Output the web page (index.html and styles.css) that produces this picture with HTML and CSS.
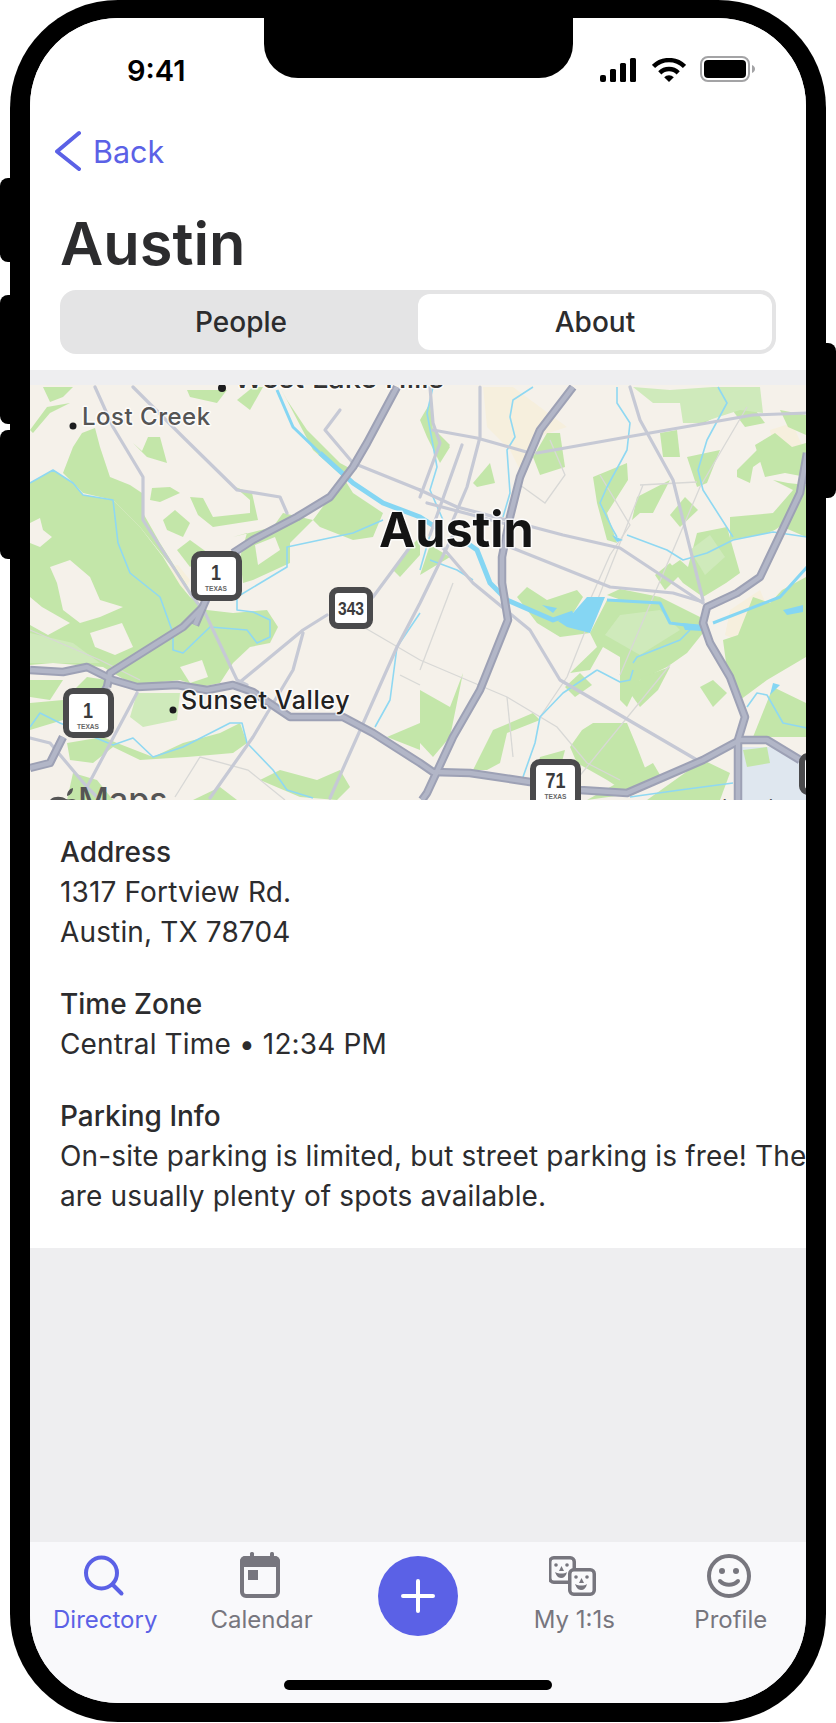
FILE: index.html
```html
<!DOCTYPE html>
<html lang="en">
<head>
<meta charset="utf-8">
<title>Austin</title>
<link rel="stylesheet" href="styles.css">
</head>
<body>
<div class="device">
  <span class="side-btn btn-mute"></span>
  <span class="side-btn btn-up"></span>
  <span class="side-btn btn-down"></span>
  <span class="side-btn btn-power"></span>
  <div class="screen">
    <div class="notch"></div>
    <header class="header">
      <div class="status">
        <span class="time">9:41</span>
        <div class="status-icons">
          <svg class="ico-signal" viewBox="0 0 36 24" width="36" height="24"><rect x="0" y="17" width="6" height="7" rx="2"/><rect x="10" y="11" width="6" height="13" rx="1.5"/><rect x="20" y="5" width="6" height="19" rx="1.5"/><rect x="30" y="0" width="6" height="24" rx="1.5"/></svg>
          <svg class="ico-wifi" viewBox="0 0 34 24" width="34" height="24"><path class="wifi-arc" d="M1.5 8.5A22 22 0 0 1 32.5 8.5"/><path class="wifi-arc" d="M7.8 14.8A13 13 0 0 1 26.2 14.8"/><path d="M17 24L12.2 19.2A6.8 6.8 0 0 1 21.8 19.2Z"/></svg>
          <svg class="ico-battery" viewBox="0 0 55 26" width="55" height="26"><rect class="batt-shell" x="1" y="1" width="48" height="24" rx="7"/><rect x="4" y="4" width="42" height="18" rx="4"/><path class="batt-nub" d="M52 9c2 .8 3 2.400 3 4s-1 3.200-3 4z"/></svg>
        </div>
      </div>
      <a class="back">
        <svg class="ico-back" viewBox="0 0 26 42" width="26" height="42"><path d="M24 3L2 21.500L24 39"/></svg>
        <span>Back</span>
      </a>
      <h1 class="title">Austin</h1>
      <div class="segment">
        <div class="seg-item">People</div>
        <div class="seg-item seg-active">About</div>
      </div>
    </header>

    <div class="map">
      <svg class="map-svg" viewBox="0 0 776 415" width="776" height="415">
        <defs>
          <g id="majors">
            <polyline points="367,2 337,58 323,82 300,112 267,132 223,155 203,168"/>
            <polyline points="173,222 153,242 80,288 77,302"/>
            <polyline points="178,210 165,240"/>
            <polyline points="0,285 33,287 57,282 83,295 107,302 147,300 177,305 203,300 223,307 260,332 313,332 343,348 390,378 403,387 440,388 500,397 550,405 597,408 673,375 710,355 737,355 770,375"/>
            <polyline points="77,302 60,330"/>
            <polyline points="33,352 20,378 0,383"/>
            <polyline points="543,2 510,45 490,92 480,132 472,172 472,198 478,235 450,305 423,352 397,408 392,415"/>
            <polyline points="777,68 770,108 730,192 707,208 677,222 673,238 680,258 700,292 715,332 708,355 708,415"/>
          </g>
        </defs>
        <g class="map-shapes">
          <g class="tan">
            <polygon points="453,2 483,2 537,42 507,52 490,85 480,65 457,42"/>
            <polygon points="137,182 148,180 160,195 150,215 140,205"/>
            <polygon points="700,225 730,205 745,240 720,262 695,250"/>
            <polygon points="740,45 762,38 772,60 745,72"/>
          </g>
          <g class="green">
            <polygon points="0,98 23,85 43,98 53,110 83,115 110,142 133,172 150,200 160,212 177,225 203,228 237,225 248,242 240,258 220,262 203,278 190,298 170,302 150,295 123,298 107,302 73,282 23,278 0,280"/>
            <polygon points="13,2 43,2 33,12 20,17"/>
            <polygon points="0,45 17,22 40,18 20,28 3,48"/>
            <polygon points="52,48 65,43 70,62 80,92 100,100 112,108 113,128 130,158 147,185 160,205 110,142 83,115 53,108 33,88 43,62"/>
            <polygon points="103,58 112,66 118,52 130,52 137,78 117,72"/>
            <polygon points="122,103 140,102 150,108 130,117 120,115"/>
            <polygon points="160,112 173,113 183,132 220,128 220,115 205,102 222,108 228,135 183,142 168,130"/>
            <polygon points="133,135 145,125 160,138 153,152 137,145"/>
            <polygon points="147,165 160,155 178,168 160,182"/>
            <polygon points="203,152 243,142 253,128 283,135 260,158 260,178 223,195 213,198 210,172 217,148"/>
            <polygon points="250,2 283,65 313,92 323,108 353,128 343,152 323,155 290,142 283,135 300,112 323,85 310,78 277,45 257,15"/>
            <polygon points="363,185 377,165 390,152 390,170 370,192"/>
            <polygon points="157,5 197,5 187,18 160,12"/>
            <polygon points="207,15 223,2 233,2 220,25"/>
            <polygon points="0,318 33,315 33,335 0,345"/>
            <polygon points="37,358 73,352 87,358 123,372 153,358 190,348 210,338 217,358 203,368 157,372 110,375 83,362 63,378 40,375"/>
            <polygon points="230,395 250,385 287,395 310,385 320,402 307,415 270,412"/>
            <polygon points="43,388 67,395 83,415 37,415"/>
            <polygon points="190,402 207,415 163,415"/>
            <polygon points="357,352 390,338 390,365"/>
            <polygon points="0,295 33,295 20,315 0,312"/>
            <polygon points="57,292 77,295 77,302 53,318 37,312"/>
            <polygon points="390,35 400,18 403,45 420,62 410,78 397,52"/>
            <polygon points="503,72 517,48 530,48 535,82 510,90"/>
            <polygon points="443,98 460,78 465,98 447,102"/>
            <polygon points="563,92 597,78 598,95 577,128 587,158 577,155 567,118"/>
            <polygon points="653,22 697,5 693,28 670,40"/>
            <polygon points="630,48 647,45 650,72 633,72"/>
            <polygon points="657,72 690,65 677,98 667,102"/>
            <polygon points="607,112 640,95 623,128 610,128 602,135"/>
            <polygon points="707,85 730,62 743,68 723,82 720,98 707,92"/>
            <polygon points="743,95 763,105 743,128 700,132 700,155 737,148 753,142 776,152 776,100 758,98"/>
            <polygon points="640,182 650,175 658,182 667,148 697,142 702,160 710,188 696,198 673,212 653,198"/>
            <polygon points="693,255 708,250 723,212 740,218 752,205 776,192 776,272 737,295 710,315 697,285"/>
            <polygon points="723,352 743,302 776,318 776,352"/>
            <polygon points="670,302 683,295 697,308 683,322"/>
            <polygon points="560,248 577,215 630,212 670,232 673,248 657,268 637,282 610,295 597,322 590,315 590,272 573,262 560,285 540,288 567,262"/>
            <polygon points="487,212 497,202 517,215 547,205 553,212 537,238 560,248 530,252 507,238"/>
            <polygon points="577,210 590,204 630,212 600,218"/>
            <polygon points="540,362 552,345 563,338 597,338 607,362 617,388 597,408 577,395 547,378"/>
            <polygon points="443,385 463,345 503,328 510,335 477,348 470,378 457,385"/>
            <polygon points="390,305 420,322 433,288 420,352 403,372 390,358"/>
            <polygon points="557,415 623,378 633,395 607,408"/>
            <polygon points="673,375 700,388 690,415 617,415"/>
            <polygon points="400,160 420,172 390,190"/>
            <polygon points="640,130 655,112 668,125 650,142"/>
            <polygon points="625,190 640,178 650,190 635,205"/>
            <polygon points="700,22 718,15 735,38 715,42"/>
            <polygon points="750,25 776,30 776,50 758,42"/>
            <polygon points="600,308 612,292 640,282 628,305 610,322"/>
            <polygon points="535,302 550,288 562,300 545,312"/>
            <polygon points="405,45 420,60 412,70"/>
            <polygon points="725,60 745,48 762,62 776,58 776,92 755,88 735,92"/>
            <polygon points="510,372 535,365 528,392 505,390"/>
          </g>
          <g class="green-light">
            <polygon points="603,2 640,5 683,2 730,2 733,28 710,25 670,38 653,38 650,18 623,18"/>
            <polygon points="107,308 150,308 147,335 113,342 100,332"/>
            <polygon points="0,248 43,258 70,278 0,278"/>
            <polygon points="590,230 630,225 650,245 610,270 575,250"/>
            <polygon points="660,165 680,150 695,172 675,190"/>
          </g>
          <g class="cream">
            <polygon points="0,138 10,133 13,145 22,152 10,162 0,158"/>
            <polygon points="20,182 40,175 60,192 70,215 93,222 70,232 50,238 33,225 27,198"/>
            <polygon points="0,212 12,222 40,238 18,250 0,240"/>
            <polygon points="60,248 92,238 103,262 85,270 65,262"/>
            <polygon points="150,282 172,275 178,292 160,298"/>
            <polygon points="225,160 245,152 250,165 228,180"/>
            <polygon points="738,150 752,140 760,165 742,172"/>
          </g>
          <polygon class="airport" points="710,362 740,362 777,375 777,415 710,415"/>
          <polygon class="green" points="713,365 737,362 740,378 717,382"/>
        </g>

        <g class="thin map-shapes">
          <polyline points="390,275 477,312 527,342 557,378 590,395"/>
          <polyline points="477,312 483,372"/>
          <polyline points="423,198 390,285"/>
          <polyline points="610,100 667,97"/>
          <polyline points="613,100 537,292 510,332"/>
          <polyline points="717,22 670,102 590,290"/>
          <polyline points="570,90 600,140 580,170 560,215"/>
          <polyline points="490,100 515,118 535,90 520,55"/>
          <polyline points="145,412 170,372 218,385 255,415"/>
          <polyline points="370,290 390,300"/>
          <polyline points="0,245 70,275 110,295"/>
          <polyline points="640,280 530,415"/>
          <polyline points="330,240 390,275"/>
        </g>

        <g class="creek map-shapes">
          <polyline points="0,98 23,85 43,98 53,110 83,115 88,158 100,188 130,212 143,248 143,265 153,268 180,242 217,245 227,258 240,252 240,235 223,227 207,225 207,212 257,182 257,162 323,148 353,135"/>
          <polyline points="0,342 10,328 30,338 83,360 103,353 123,372 153,362 200,338 212,338 217,358 243,385 257,405 283,413"/>
          <polyline points="345,342 360,315 367,262 390,228"/>
          <polyline points="400,175 427,185 443,195"/>
          <polyline points="403,2 397,28 407,82 400,105 413,135"/>
          <polyline points="503,2 483,15 480,32 485,52 477,65 480,108 473,132"/>
          <polyline points="587,2 587,18 600,38 597,65 590,78 577,102 570,118 583,145 587,152"/>
          <polyline points="597,150 637,165 653,175 677,168 703,155 743,147 777,152"/>
          <polyline points="688,2 697,18 677,55 668,85 673,105 703,152"/>
          <polyline points="660,245 650,255 607,272 603,278"/>
          <polyline points="567,285 590,297 600,295 603,285"/>
          <polyline points="567,285 533,308 510,332 505,358 493,392"/>
          <polyline points="717,322 727,308 737,310 753,338 777,343"/>
          <polyline points="600,412 650,405 703,398"/>
          <polyline points="400,150 390,185"/>
        </g>

        <g class="river map-shapes">
          <polyline class="river-n" points="247,5 263,42 290,68"/>
          <polyline class="river-w" points="290,68 323,98 353,118 390,132 410,145"/>
          <polyline class="river-w" points="437,158 447,165 460,198 477,215 523,235 543,228"/>
          <polyline class="river-s" points="577,215 630,218 640,238 670,242"/>
          <polyline class="river-s" points="683,238 750,212 777,182"/>
          <polygon class="water" points="557,212 575,212 560,248 537,242 528,236 543,228"/>
          <polygon class="water" points="753,225 773,220 773,227 757,230"/>
          <polygon class="water" points="582,150 593,155 587,157"/>
          <polygon class="water" points="743,298 750,300 740,310"/>
          <polygon class="water" points="512,220 527,223 523,228"/>
          <polygon class="water" points="652,238 675,240 672,246 655,245"/>
        </g>

        <g class="minor map-shapes">
          <polyline points="65,2 83,42 113,92 113,135 160,208 175,228 207,295 217,300"/>
          <polyline points="103,2 153,52 207,105 250,112 257,128"/>
          <polyline points="310,25 295,45 323,78 390,105"/>
          <polyline points="210,297 273,245 297,230"/>
          <polyline points="343,212 380,162"/>
          <polyline points="273,248 263,285 223,352 180,413"/>
          <polyline points="300,413 367,262 390,218 423,150"/>
          <polyline points="107,308 57,402"/>
          <polyline points="0,353 20,358 57,402 70,415"/>
          <polyline points="600,2 610,35 643,95 673,215"/>
          <polyline points="507,68 597,52 723,30 777,28"/>
          <polyline points="400,2 403,38 410,58 390,112"/>
          <polyline points="403,45 447,53 500,68"/>
          <polyline points="390,105 427,122 533,150 590,163 673,218"/>
          <polyline points="480,162 580,202 643,208 673,217"/>
          <polyline points="413,163 443,198 500,245 530,295 667,375"/>
          <polyline points="450,2 450,52 437,102 423,135"/>
          <polyline points="397,118 480,140"/>
          <polyline points="432,60 400,150"/>
        </g>

        <g class="map-shapes">
          <use href="#majors" class="major-out"/>
          <use href="#majors" class="major-in"/>
        </g>

        <g class="shield">
          <rect x="164" y="169" width="45" height="44" rx="7"/>
          <text class="shield-num" x="186" y="195" textLength="10" lengthAdjust="spacingAndGlyphs">1</text>
          <text class="shield-sub" x="186" y="206" textLength="22" lengthAdjust="spacingAndGlyphs">TEXAS</text>
        </g>
        <g class="shield">
          <rect x="36" y="306" width="45" height="44" rx="7"/>
          <text class="shield-num" x="58" y="333" textLength="10" lengthAdjust="spacingAndGlyphs">1</text>
          <text class="shield-sub" x="58" y="344" textLength="22" lengthAdjust="spacingAndGlyphs">TEXAS</text>
        </g>
        <g class="shield">
          <rect x="302" y="205" width="38" height="36" rx="6"/>
          <text class="shield-num shield-num-sm" x="321" y="230" textLength="26" lengthAdjust="spacingAndGlyphs">343</text>
        </g>
        <g class="shield">
          <rect x="503" y="377" width="45" height="44" rx="7"/>
          <text class="shield-num" x="525.500" y="403" textLength="20" lengthAdjust="spacingAndGlyphs">71</text>
          <text class="shield-sub" x="525.500" y="414" textLength="22" lengthAdjust="spacingAndGlyphs">TEXAS</text>
        </g>
        <g class="shield">
          <rect x="772" y="371" width="40" height="36" rx="6"/>
        </g>

        <circle class="city-dot" cx="192" cy="3" r="4"/>
        <text class="label label-top" x="204" y="3">West Lake Hills</text>
        <circle class="city-dot" cx="43" cy="41" r="3.500"/>
        <text class="label label-lost" x="52" y="40">Lost Creek</text>
        <circle class="city-dot" cx="143" cy="325" r="3.500"/>
        <text class="label label-sunset" x="151" y="324">Sunset Valley</text>
        <text class="label label-austin" x="349" y="162">Austin</text>
        <path class="apple" d="M36 414c-4-3-12-3-15 0-4 4-3 10-1 15h30c-3-3-4-6-1-10-1-3-4-5-7-5-2 0-4 1-6 0zM37 411c0-4 2-7 6-8 0 4-2 7-6 8z"/>
        <text class="label label-maps" x="48" y="427">Maps</text>
        <text class="label label-legal" x="692" y="429">Legal</text>
      </svg>
    </div>

    <section class="details">
      <div class="block">
        <div class="block-label">Address</div>
        <div class="block-value">1317 Fortview Rd.<br>Austin, TX 78704</div>
      </div>
      <div class="block">
        <div class="block-label">Time Zone</div>
        <div class="block-value">Central Time • 12:34 PM</div>
      </div>
      <div class="block">
        <div class="block-label">Parking Info</div>
        <div class="block-value">On-site parking is limited, but street parking is free! There<br>are usually plenty of spots available.</div>
      </div>
    </section>

    <div class="spacer"></div>

    <nav class="tabbar">
      <div class="tabs">
        <div class="tab tab-active">
          <svg class="tab-icon" viewBox="0 0 48 48" width="48" height="48"><circle cx="20.500" cy="21" r="15.500"/><path d="M31.500 32.500l9 9"/></svg>
          <span>Directory</span>
        </div>
        <div class="tab">
          <svg class="tab-icon" viewBox="2 0 48 48" width="48" height="48"><rect x="6" y="6" width="36" height="38" rx="4"/><path class="cal-fill" d="M4 15V9a5 5 0 0 1 5-5h30a5 5 0 0 1 5 5v6z"/><rect class="cal-fill" x="14" y="0" width="4" height="6" rx="1.500"/><rect class="cal-fill" x="34" y="0" width="4" height="6" rx="1.500"/><rect class="cal-fill" x="12" y="18" width="10" height="10"/></svg>
          <span>Calendar</span>
        </div>
        <div class="tab tab-plus">
          <button class="plus" type="button">
            <svg viewBox="0 0 34 34" width="34" height="34"><path d="M17 2v30M2 17h30"/></svg>
          </button>
        </div>
        <div class="tab">
          <svg class="tab-icon tab-icon-pair" viewBox="2 0 50 48" width="50" height="48"><rect x="2.750" y="5.750" width="24.500" height="24.500" rx="4"/><circle class="cal-fill" cx="9" cy="13" r="1.800"/><circle class="cal-fill" cx="20" cy="13" r="1.800"/><path class="cal-fill" d="M14.500 14l2.500 5h-5z"/><path class="cal-fill" d="M8 20c4 2 9 2 12 0-1 4-3 6-6 6s-5-3-6-6z"/><rect class="pair-front" x="22.750" y="17.750" width="24.500" height="24.500" rx="4"/><circle class="cal-fill" cx="29" cy="25" r="1.800"/><circle class="cal-fill" cx="40" cy="25" r="1.800"/><path class="cal-fill" d="M34.500 26l2.500 5h-5z"/><path class="cal-fill" d="M28 32c4 2 9 2 12 0-1 4-3 6-6 6s-5-3-6-6z"/></svg>
          <span>My 1:1s</span>
        </div>
        <div class="tab">
          <svg class="tab-icon" viewBox="2 0 48 48" width="48" height="48"><circle cx="24" cy="24" r="20"/><circle class="cal-fill" cx="17" cy="19" r="3"/><circle class="cal-fill" cx="31" cy="19" r="3"/><path d="M15 29c5 5 13 5 18 0"/></svg>
          <span>Profile</span>
        </div>
      </div>
      <div class="home-indicator"></div>
    </nav>
  </div>
</div>
</body>
</html>
```

FILE: styles.css
```css
* { box-sizing: border-box; }
html, body { margin: 0; padding: 0; background: #fff; }
body { font-family: Inter, "Liberation Sans", sans-serif; color: #2c2c2e; }

.device {
  position: relative;
  width: 816px;
  height: 1722px;
  margin: 0 10px;
  padding: 18px 20px 19px;
  background: #000;
  border-radius: 108px;
}
.side-btn { position: absolute; background: #000; width: 14px; }
.btn-mute { left: -10px; top: 178px; height: 84px; border-radius: 8px 0 0 8px; }
.btn-up { left: -10px; top: 295px; height: 129px; border-radius: 8px 0 0 8px; }
.btn-down { left: -10px; top: 430px; height: 129px; border-radius: 8px 0 0 8px; }
.btn-power { right: -10px; top: 343px; height: 155px; border-radius: 0 8px 8px 0; }

.screen {
  position: relative;
  height: 1685px;
  display: flex;
  flex-direction: column;
  background: #eeeef0;
  border-radius: 88px;
  overflow: hidden;
}
.notch {
  position: absolute;
  left: 234px;
  top: 0;
  width: 309px;
  height: 60px;
  background: #000;
  border-radius: 0 0 34px 34px;
}

.header { background: #fff; padding-bottom: 16px; }
.status {
  height: 112px;
  padding: 38px 51px 0 97px;
  display: flex;
  justify-content: space-between;
  align-items: flex-start;
}
.time { font-size: 29px; line-height: 30px; font-weight: 600; color: #000; }
.status-icons { display: flex; gap: 16px; align-items: flex-end; height: 26px; }
.status-icons svg { display: block; }
.ico-wifi { margin-right: -2px; }
.wifi-arc { fill: none; stroke: #000; stroke-width: 4.500px; }
.batt-shell { fill: none; stroke: #a3a3a5; stroke-width: 2px; }
.batt-nub { fill: #a3a3a5; }

.back {
  display: flex;
  align-items: center;
  gap: 12px;
  height: 42px;
  padding-left: 25px;
  color: #5b61e6;
  font-size: 30.500px;
}
.ico-back { display: block; fill: none; stroke: #5b61e6; stroke-width: 4px; stroke-linecap: round; stroke-linejoin: round; }
.title {
  margin: 37px 0 13px;
  padding-left: 30px;
  font-size: 59.500px;
  line-height: 68px;
  font-weight: 600;
}
.segment {
  display: flex;
  margin: 0 30px;
  height: 64px;
  padding: 4px;
  background: #e4e4e5;
  border-radius: 16px;
}
.seg-item {
  flex: 1;
  display: flex;
  align-items: center;
  justify-content: center;
  font-size: 28px;
  font-weight: 450;
  border-radius: 12px;
}
.seg-active { background: #fff; }

.map { margin-top: 15px; height: 415px; background: #f5f1ea; overflow: hidden; }
.map-svg { display: block; }
.map-shapes { filter: blur(.6px); }
.green, .green polygon { fill: #c3e6a9; }
.green-light polygon { fill: #cfeabb; }
.tan polygon { fill: #f6efdd; }
.cream polygon { fill: #f5f1ea; }
.airport { fill: #dfe7ef; }
.thin polyline { fill: none; stroke: #d8d8d6; stroke-width: 1.300px; }
.creek polyline { fill: none; stroke: #8fd8f2; stroke-width: 1.600px; stroke-linejoin: round; }
.river polyline { fill: none; stroke: #85d6f3; stroke-linejoin: round; }
.river-n { stroke-width: 3px; }
.river-w { stroke-width: 5px; }
.river-s { stroke-width: 3px; }
.water { fill: #85d6f3; }
.minor polyline { fill: none; stroke: #c6c9d5; stroke-width: 3.200px; stroke-linejoin: round; stroke-linecap: round; }
.major-out { fill: none; stroke: #9da1b5; stroke-width: 8.500px; stroke-linejoin: round; }
.major-in { fill: none; stroke: #b2b6c7; stroke-width: 4.500px; stroke-linejoin: round; }
.shield rect { fill: #fff; stroke: #4a4a4c; stroke-width: 6px; }
.shield-num { font-family: "Liberation Sans", sans-serif; font-size: 22px; font-weight: 700; fill: #3b3b3d; text-anchor: middle; }
.shield-num-sm { font-size: 19px; }
.shield-sub { font-family: "Liberation Sans", sans-serif; font-size: 8px; font-weight: 700; fill: #666; text-anchor: middle; }
.city-dot { fill: #1c1c1e; }
.label {
  font-family: Inter, "Liberation Sans", sans-serif;
  paint-order: stroke;
  stroke: #fff;
  stroke-opacity: .8;
  stroke-width: 3px;
  stroke-linejoin: round;
}
.label-top { font-size: 29px; font-weight: 500; fill: #333; }
.label-lost { font-size: 24px; font-weight: 500; fill: #555; letter-spacing: .5px; }
.label-sunset { font-size: 25px; font-weight: 500; fill: #222; letter-spacing: .6px; }
.label-austin { font-size: 48.500px; font-weight: 700; fill: #141414; }
.label-maps { font-size: 34px; font-weight: 500; fill: #555; stroke: none; }
.label-legal { font-size: 20px; fill: #555; stroke: none; }
.apple { fill: #555; }

.details {
  background: #fff;
  padding: 32px 0 32px 30px;
  font-size: 28px;
  line-height: 40px;
  white-space: nowrap;
  overflow: hidden;
  display: flex;
  flex-direction: column;
  gap: 32px;
}
.block-label { font-weight: 500; }
.block-value { letter-spacing: .15px; }

.spacer { flex: 1; background: #eeeef0; }

.tabbar { background: #f9f9fb; padding-top: 10px; }
.tabs { display: grid; grid-template-columns: repeat(5, 1fr); height: 84px; margin: 0 -3px; }
.tab {
  display: flex;
  flex-direction: column;
  align-items: center;
  gap: 4px;
  color: #77767e;
  font-size: 24px;
  line-height: 32px;
}
.tab-active { color: #5b61e6; }
.tab-plus { padding-top: 4px; }
.tab-icon { display: block; fill: none; stroke: #77767e; stroke-width: 4px; stroke-linecap: round; }
.tab-active .tab-icon { stroke: #5b61e6; }
.cal-fill { fill: #77767e; stroke: none; }
.tab-icon-pair { stroke-width: 3.500px; }
.pair-front { fill: #f9f9fb; }
.plus {
  width: 80px;
  height: 80px;
  padding: 0;
  border: 0;
  border-radius: 50%;
  background: #5b61e6;
  display: flex;
  align-items: center;
  justify-content: center;
}
.plus svg { fill: none; stroke: #fff; stroke-width: 4px; stroke-linecap: round; }
.home-indicator {
  width: 268px;
  height: 10px;
  margin: 44px auto 13px;
  background: #000;
  border-radius: 5px;
}
```
